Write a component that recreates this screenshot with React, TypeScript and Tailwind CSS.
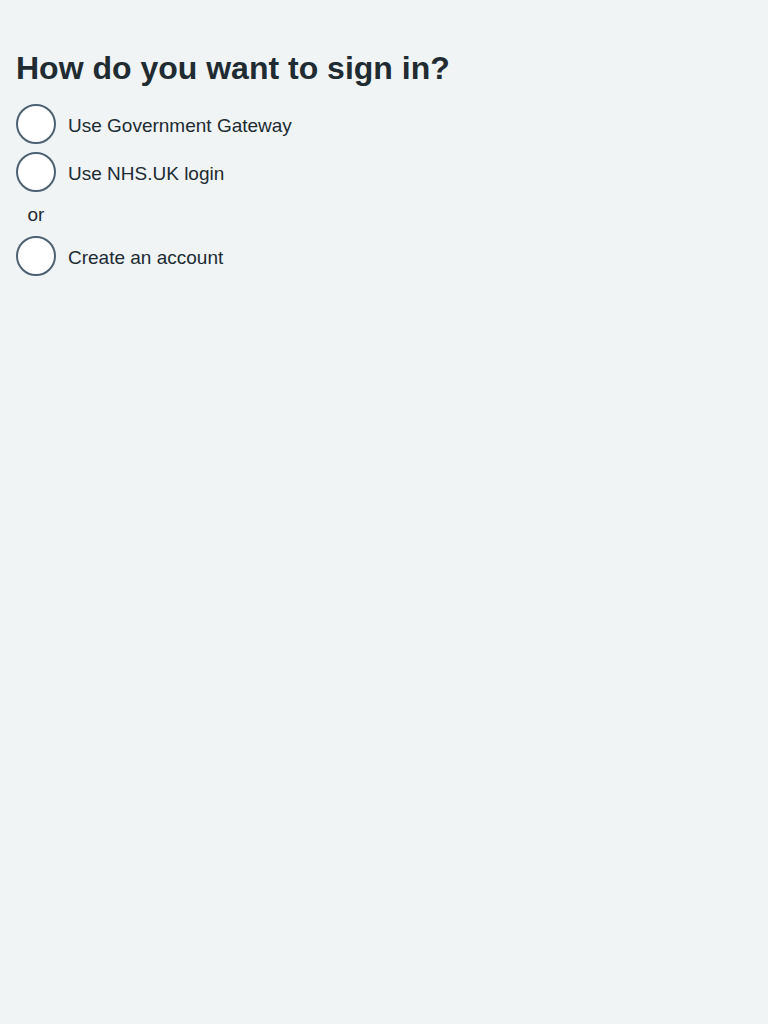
const options = ["Use Government Gateway", "Use NHS.UK login"];

function Radio({ label }: { label: string }) {
  return (
    <label className="flex h-10 cursor-pointer items-center gap-3">
      <span className="h-10 w-10 shrink-0 rounded-full border-2 border-[#4c6272] bg-white" />
      <span className="mt-1 text-[19px] leading-7">{label}</span>
    </label>
  );
}

export default function App() {
  return (
    <div className="min-h-screen bg-[#f0f4f5] px-4 pt-12 font-['Liberation_Sans',Arial,sans-serif] text-[#212b32]">
      <h1 className="mb-4 text-[32px] font-bold leading-10">How do you want to sign in?</h1>
      <div className="flex flex-col gap-2">
        {options.map((o) => (
          <Radio key={o} label={o} />
        ))}
        <div className="h-7 w-10 pt-px text-center text-[19px] leading-7">or</div>
        <Radio label="Create an account" />
      </div>
    </div>
  );
}
